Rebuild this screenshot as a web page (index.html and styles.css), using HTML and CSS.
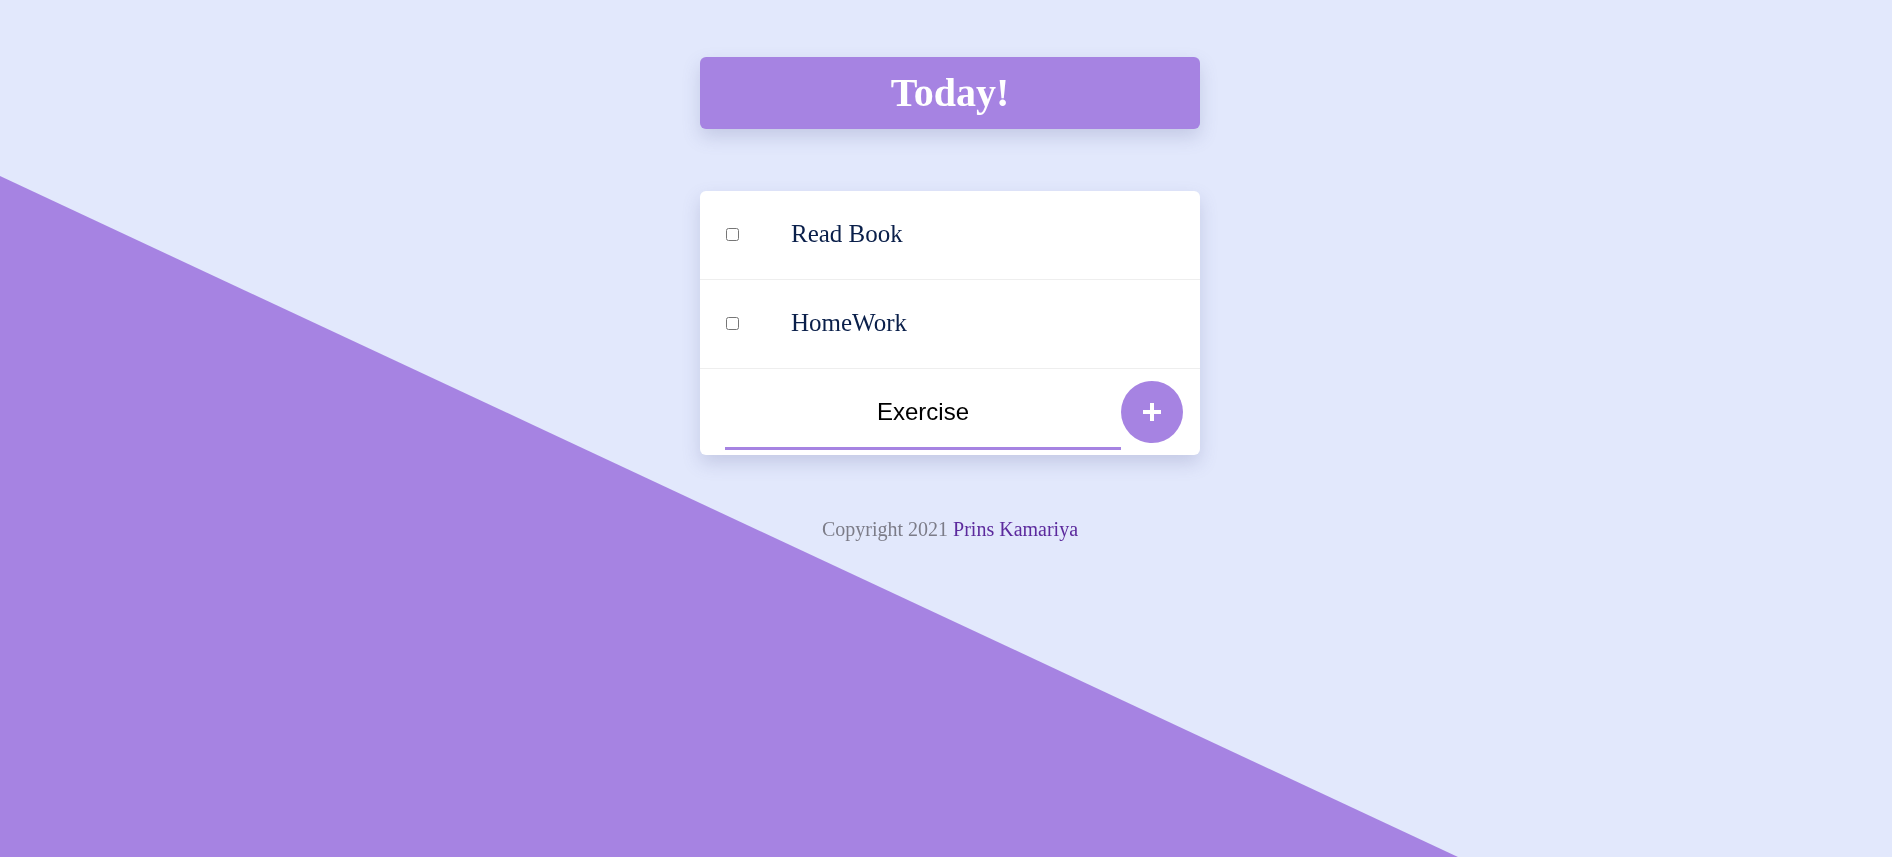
FILE: index.html
```html
<!DOCTYPE html>
<html>
<head>
<meta charset="utf-8">
<title>Today!</title>
<link rel="stylesheet" href="styles.css">
</head>
<body>
<div class="bg-shape"></div>
<main class="page">
  <div class="column">
    <header class="title-box"><h1 class="title">Today!</h1></header>
    <section class="card">
      <div class="item">
        <input type="checkbox" class="check">
        <p class="item-text">Read Book</p>
      </div>
      <div class="item">
        <input type="checkbox" class="check">
        <p class="item-text">HomeWork</p>
      </div>
      <form class="add-row">
        <input type="text" class="add-input" value="Exercise">
        <button type="button" class="add-btn" aria-label="Add">
          <svg width="20" height="20" viewBox="0 0 20 20"><path d="M10 1V19M1 10H19" stroke="#fff" stroke-width="4" fill="none"/></svg>
        </button>
      </form>
    </section>
    <footer class="footer">Copyright 2021 <span class="author">Prins Kamariya</span></footer>
  </div>
</main>
</body>
</html>
```
FILE: styles.css
```css
html, body {
  margin: 0;
  padding: 0;
}
html {
  height: 100%;
}
body {
  background: #e2e8fc;
  font-family: "Liberation Serif", "Times New Roman", serif;
  height: 100%;
  overflow: hidden;
}
.bg-shape {
  position: fixed;
  inset: 0;
  background: #a683e2;
  clip-path: polygon(0 176px, 1458px 857px, 0 857px);
  z-index: 0;
}
.page {
  position: relative;
  z-index: 1;
  padding-left: 8px;
}
.column {
  width: 500px;
  margin: 0 auto;
  padding-top: 57px;
  display: flex;
  flex-direction: column;
}
.title-box {
  height: 72px;
  background: #a683e2;
  border-radius: 6px;
  box-shadow: 0 8px 18px rgba(90, 95, 150, 0.22);
  display: flex;
  align-items: center;
  justify-content: center;
}
.title {
  margin: 0;
  color: #fff;
  font-size: 40px;
  font-weight: bold;
  line-height: 1;
}
.card {
  margin-top: 62px;
  background: #fff;
  border-radius: 6px;
  box-shadow: 0 8px 18px rgba(90, 95, 150, 0.22);
  overflow: hidden;
}
.item {
  height: 88px;
  display: flex;
  align-items: center;
  padding-left: 22px;
  border-bottom: 1px solid #eeeeee;
}
.check {
  margin: 0 3px 2px 4px;
  width: 13px;
  height: 13px;
}
.item-text {
  margin: 0 0 2px 49px;
  font-size: 25px;
  color: #0a1f4a;
}
.add-row {
  height: 86px;
  margin: 0;
  display: flex;
  align-items: center;
  padding: 0 17px 0 25px;
}
.add-input {
  align-self: flex-end;
  margin-bottom: 5px;
  width: 396px;
  height: 77px;
  box-sizing: border-box;
  padding: 3px 0 0 0;
  border: none;
  border-bottom: 3px solid #a683e2;
  outline: none;
  background: transparent;
  text-align: center;
  font-family: "Liberation Sans", Arial, sans-serif;
  font-size: 24px;
  color: #000;
}
.add-btn {
  width: 62px;
  height: 62px;
  border-radius: 50%;
  border: none;
  padding: 0;
  background: #a683e2;
  display: flex;
  align-items: center;
  justify-content: center;
  flex-shrink: 0;
}
.footer {
  margin-top: 63px;
  text-align: center;
  font-size: 20px;
  color: #7c7c88;
}
.author {
  color: #5c2a9d;
}
```
